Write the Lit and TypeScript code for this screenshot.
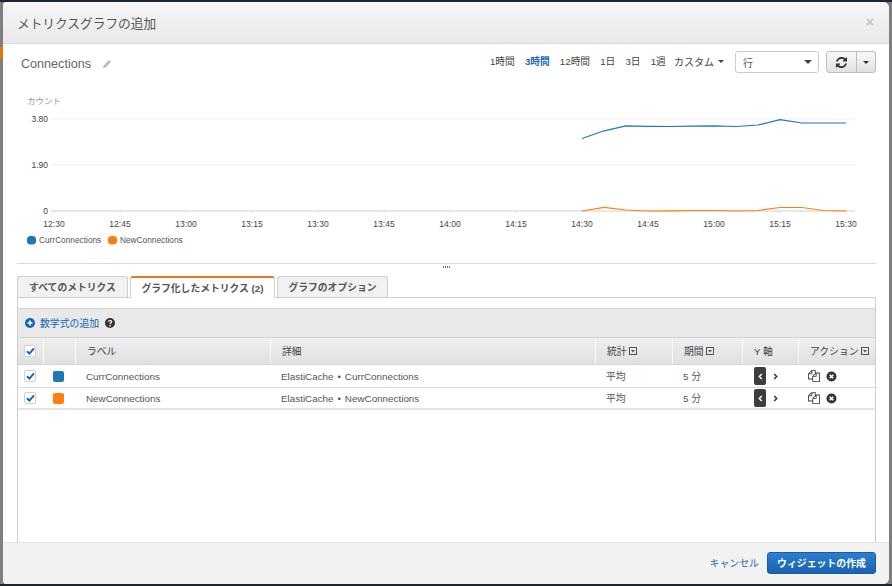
import { LitElement, html, css, svg } from "lit";
import { customElement } from "lit/decorators.js";

const FONT = css`"Liberation Sans", "Noto Sans CJK JP", Arial, sans-serif`;
const xs = [582, 604, 626, 648, 670, 692, 714, 736, 758, 780, 802, 824, 846];
const blue = [138.5, 130.8, 125.8, 126.3, 126.5, 126.2, 125.8, 126.5, 125, 119.6, 123, 123, 123];
const orange = [211, 207.4, 210, 211, 210.8, 210.5, 210.5, 211, 210.5, 207.5, 207.5, 210.5, 211];
const ticks = ["12:30", "12:45", "13:00", "13:15", "13:30", "13:45", "14:00", "14:15", "14:30", "14:45", "15:00", "15:15", "15:30"];
const pts = (ys: number[]) => ys.map((y, i) => `${xs[i]},${y - 88}`).join(" ");

const REFRESH = "M1639 1056q0 5-1 7-64 268-268 434.5t-478 166.5q-146 0-282.5-55t-243.5-157l-129 129q-19 19-45 19t-45-19-19-45v-448q0-26 19-45t45-19h448q26 0 45 19t19 45-19 45l-137 137q71 66 161 102t187 36q134 0 250-65t186-179q11-17 53-117 8-23 30-23h192q13 0 22.5 9.5t9.5 22.5zm25-800v448q0 26-19 45t-45 19h-448q-26 0-45-19t-19-45 19-45l138-138q-148-137-349-137-134 0-250 65t-186 179q-11 17-53 117-8 23-30 23h-199q-13 0-22.5-9.5t-9.5-22.5v-7q65-268 270-434.5t480-166.5q146 0 284 55.5t245 156.5l130-129q19-19 45-19t45 19 19 45z";
const FILES = "M1696 384q40 0 68 28t28 68v1216q0 40-28 68t-68 28h-960q-40 0-68-28t-28-68v-288h-544q-40 0-68-28t-28-68v-672q0-40 20-88t48-76l408-408q28-28 76-48t88-20h416q40 0 68 28t28 68v328q68-40 128-40h416zm-544 213l-299 299h299v-299zm-640-384l-299 299h299v-299zm196 647l316-316v-416h-384v416q0 40-28 68t-68 28h-416v640h512v-256q0-40 20-88t48-76zm956 804v-1152h-384v416q0 40-28 68t-68 28h-416v640h896z";

const check = html`<span class="cb"><svg width="9" height="8" viewBox="0 0 9 8"><path d="M1 4.2 3.4 6.6 8 1.4" fill="none" stroke="#1166bb" stroke-width="2"/></svg></span>`;
const sortIcon = html`<svg class="sort" width="8" height="8" viewBox="0 0 8 8"><rect x=".5" y=".5" width="7" height="7" fill="none" stroke="#555"/><path d="M2 3h4L4 5.5z" fill="#555"/></svg>`;
const copyIcon = html`<svg width="12" height="12" viewBox="0 0 1792 1792"><path d="${FILES}" fill="#3a3a3a"/></svg>`;
const delIcon = html`<svg width="11" height="11" viewBox="0 0 11 11"><circle cx="5.5" cy="5.5" r="5" fill="#333"/><path d="M3.7 3.7l3.6 3.6M7.3 3.7l-3.6 3.6" stroke="#fff" stroke-width="1.5"/></svg>`;

@customElement("app-root")
export class AppRoot extends LitElement {
  static styles = css`
    :host {
      display: block; width: 892px; height: 586px; box-sizing: border-box; padding: 2px 3px;
      font-family: ${FONT}; overflow: hidden;
      background:
        linear-gradient(#e07a10, #e07a10) 0 47px / 3px 12px no-repeat,
        linear-gradient(#1c2630, #1c2630) 0 0 / 100% 2px no-repeat,
        linear-gradient(#1c2630, #1c2630) 0 584px / 100% 2px no-repeat,
        #7f7f7f;
    }
    .modal { height: 582px; background: #fff; border-radius: 4px 6px 6px 4px; display: flex; flex-direction: column; overflow: hidden; }
    .head { height: 42px; flex: none; box-sizing: border-box; border-bottom: 1px solid #dcdcdc; background: linear-gradient(#f6f6f6, #e9e9e9); display: flex; align-items: center; justify-content: space-between; padding: 0 15px 1px 14px; }
    .title { font-size: 12.7px; color: #555; }
    .x { font-size: 14px; font-weight: bold; color: #c4c4c4; line-height: 1; }
    .main { flex: 1; padding: 0 13px 0 14px; display: flex; flex-direction: column; min-height: 0; }
    .toolbar { height: 44px; flex: none; display: flex; align-items: flex-start; padding: 7px 0 0 4px; box-sizing: border-box; }
    .name { font-size: 12.6px; color: #666; margin-top: 6px; display: flex; align-items: center; gap: 11px; }
    .times { margin-left: auto; display: flex; font-size: 9.7px; color: #444; gap: 10.2px; margin-top: 2px; height: 16px; align-items: center; }
    .times .on { color: #1166bb; font-weight: bold; }
    .custom { font-size: 10px; display: flex; align-items: center; gap: 4px; margin-left: -2px; }
    .caret { width: 0; height: 0; border: 3px solid transparent; border-top: 3px solid #444; border-bottom: 0; display: inline-block; }
    .select { width: 84px; height: 22px; box-sizing: border-box; border: 1px solid #ccc; border-radius: 3px; margin-left: 11px; display: flex; align-items: center; justify-content: space-between; padding: 0 6px 0 7px; font-size: 10px; color: #555; background: #fff; }
    .select .caret { border-width: 4px 4px 0; }
    .btns { display: flex; margin-left: 7px; height: 22px; box-sizing: border-box; border: 1px solid #bdbdbd; border-radius: 3px; background: linear-gradient(#f8f8f8, #e2e2e2); }
    .btns div { display: flex; align-items: center; justify-content: center; }
    .btns .a { width: 29px; border-right: 1px solid #bdbdbd; }
    .btns .b { width: 18px; }
    .btns .caret { border-width: 3px 3px 0; border-top-color: #333; }
    .chart { display: block; width: 859px; height: 175px; flex: none; overflow: visible; }
    .chart text { font-family: ${FONT}; }
    .divider { flex: none; height: 1px; background: #d8d8d8; position: relative; }
    .grip { position: absolute; left: 426px; top: 3px; width: 8px; height: 2px; background: repeating-linear-gradient(90deg, #777 0 1px, transparent 1px 2px); }
    .tabs { flex: none; display: flex; gap: 2px; margin-top: 12px; height: 22px; box-sizing: border-box; border-bottom: 1px solid #cfcfcf; }
    .tab { box-sizing: border-box; height: 21px; display: flex; align-items: center; justify-content: center; font-size: 9.8px; color: #555; font-weight: bold; background: #f1f1f1; border: 1px solid #cfcfcf; border-bottom: 0; border-radius: 3px 3px 0 0; }
    .tab.t1 { width: 111px; }
    .tab.t2 { width: 145px; }
    .tab.t3 { width: 111px; }
    .tab.active { height: 22px; background: #fff; border-top: 2px solid #e8791a; z-index: 1; }
    .panel { flex: 1; min-height: 0; border: solid #cfcfcf; border-width: 0 1px; display: flex; flex-direction: column; padding-top: 10px; }
    .math { flex: none; height: 30px; box-sizing: border-box; border-top: 1px solid #d4d4d4; border-bottom: 1px solid #d4d4d4; background: #e9e9e9; display: flex; align-items: center; gap: 5px; padding-left: 7px; font-size: 9.85px; color: #1166bb; }
    .math .help { margin-left: 1px; }
    .row { display: grid; grid-template-columns: 25px 32px 195px 325px 77px 70px 56px 78px; flex: none; box-sizing: border-box; }
    .thead { height: 27px; background: linear-gradient(#efefef, #e0e0e0); border-bottom: 1px solid #d4d4d4; font-size: 9.8px; color: #444; }
    .thead > div { display: flex; align-items: center; padding-left: 11px; gap: 2px; border-left: 1px solid #f7f7f7; box-sizing: border-box; }
    .thead > div:first-child { border-left: 0; }
    .tr { height: 23px; border-bottom: 1px solid #d9d9d9; font-size: 9.85px; color: #555; }
    .tr.last { height: 22px; border-bottom: 2px solid #e4e4e4; }
    .tr > div { display: flex; align-items: center; padding-left: 11px; box-sizing: border-box; }
    .row > .c0 { padding-left: 6px; }
    .row > .c1 { padding-left: 10px; }
    .detail { word-spacing: 1.2px; }
    .cb { width: 10px; height: 10px; border: 1px solid #d0d0d0; border-radius: 2px; background: #fff; display: inline-flex; align-items: center; justify-content: center; }
    .swatch { width: 11px; height: 11px; border-radius: 2px; }
    .tr > .yaxis { gap: 7px; padding-left: 12px; }
    .yl { width: 12px; height: 18px; background: #3d3d3d; border-radius: 2px; display: flex; align-items: center; justify-content: center; }
    .tr > .acts { gap: 6px; padding-left: 10px; }
    .foot { height: 42px; flex: none; box-sizing: border-box; background: #f2f2f2; border-top: 1px solid #e2e2e2; display: flex; align-items: center; justify-content: flex-end; gap: 8px; padding: 0 13px 2px 0; }
    .cancel { font-size: 9.9px; color: #1b66b3; }
    .primary { width: 109px; height: 22px; border-radius: 3px; background: linear-gradient(#2b7fd0, #1a62b0); color: #fff; font-size: 9.9px; font-weight: bold; display: flex; align-items: center; justify-content: center; border: 1px solid #1a5ca5; box-sizing: border-box; }
  `;

  row(name: string, color: string, last: boolean) {
    const chev = (d: string, c: string) => html`<svg width="5" height="7" viewBox="0 0 5 7"><path d="${d}" fill="none" stroke="${c}" stroke-width="1.5"/></svg>`;
    return html`<div class="row tr ${last ? "last" : ""}">
      <div class="c0">${check}</div>
      <div class="c1"><span class="swatch" style="background:${color}"></span></div>
      <div>${name}</div>
      <div class="detail">ElastiCache • ${name}</div>
      <div>平均</div>
      <div>5 分</div>
      <div class="yaxis"><span class="yl">${chev("M3.8 1 1.3 3.5l2.5 2.5", "#fff")}</span>${chev("M1.2 1l2.5 2.5-2.5 2.5", "#333")}</div>
      <div class="acts">${copyIcon}${delIcon}</div>
    </div>`;
  }

  render() {
    return html`<div class="modal">
      <div class="head"><div class="title">メトリクスグラフの追加</div><div class="x">×</div></div>
      <div class="main">
        <div class="toolbar">
          <div class="name">Connections
            <svg width="10" height="10" viewBox="0 0 10 10"><path d="M7 1l2 2-5.5 5.5L1 9l.5-2.5z" fill="#bdbdbd"/></svg>
          </div>
          <div class="times">
            <span>1時間</span><span class="on">3時間</span><span>12時間</span><span>1日</span><span>3日</span><span>1週</span>
            <span class="custom">カスタム <i class="caret"></i></span>
          </div>
          <div class="select">行 <i class="caret"></i></div>
          <div class="btns">
            <div class="a"><svg width="13" height="13" viewBox="0 0 1792 1792"><path d="${REFRESH}" fill="#333"/></svg></div>
            <div class="b"><i class="caret"></i></div>
          </div>
        </div>
        ${this.chart()}
        <div class="divider"><div class="grip"></div></div>
        <div class="tabs">
          <div class="tab t1">すべてのメトリクス</div>
          <div class="tab t2 active">グラフ化したメトリクス (2)</div>
          <div class="tab t3">グラフのオプション</div>
        </div>
        <div class="panel">
          <div class="math">
            <svg width="10" height="10" viewBox="0 0 10 10"><circle cx="5" cy="5" r="5" fill="#1166bb"/><path d="M2.5 5h5M5 2.5v5" stroke="#fff" stroke-width="1.6"/></svg>
            <span>数学式の追加</span>
            <svg class="help" width="10" height="10" viewBox="0 0 10 10"><circle cx="5" cy="5" r="5" fill="#333"/><path d="M3.4 3.9C3.5 2.1 6.7 2.1 6.7 3.8 6.7 5 5 4.9 5 6.2" fill="none" stroke="#fff" stroke-width="1.2"/><rect x="4.3" y="7" width="1.4" height="1.4" fill="#fff"/></svg>
          </div>
          <div class="row thead">
            <div class="c0">${check}</div><div></div><div>ラベル</div><div>詳細</div>
            <div>統計${sortIcon}</div><div>期間${sortIcon}</div><div>Y 軸</div><div>アクション${sortIcon}</div>
          </div>
          ${this.row("CurrConnections", "#1f77b4", false)}
          ${this.row("NewConnections", "#ff7f0e", true)}
        </div>
      </div>
      <div class="foot"><span class="cancel">キャンセル</span><div class="primary">ウィジェットの作成</div></div>
    </div>`;
  }

  chart() {
    return html`<svg class="chart" width="859" height="175" viewBox="17 0 859 175">
      ${svg`<text x="27" y="16" font-size="8.5" fill="#999">カウント</text>`}
      ${[[31, "3.80"], [77, "1.90"], [123, "0"]].map(([y, t]) => svg`
        <text x="48" y="${(y as number) + 3}" font-size="8.5" fill="#444" text-anchor="end">${t}</text>
        <line x1="51" x2="855" y1="${y}" y2="${y}" stroke="${t === "0" ? "#d0d0d0" : "#f0f0f0"}" stroke-width="1"/>`)}
      ${ticks.map((t, i) => svg`
        <line x1="${54 + i * 66}" x2="${54 + i * 66}" y1="123" y2="126" stroke="#e6e6e6"/>
        <text x="${54 + i * 66}" y="139" font-size="8.5" fill="#444" text-anchor="middle">${t}</text>`)}
      <polyline points="${pts(blue)}" fill="none" stroke="#1f77b4" stroke-width="1.2"/>
      <polyline points="${pts(orange)}" fill="none" stroke="#ff7f0e" stroke-width="1.2"/>
      <rect x="27" y="148" width="9" height="8.5" rx="3.5" fill="#1f77b4"/>
      <text x="39" y="155" font-size="8.3" fill="#555">CurrConnections</text>
      <rect x="108" y="148" width="9" height="8.5" rx="3.5" fill="#ff7f0e"/>
      <text x="120" y="155" font-size="8.3" fill="#555">NewConnections</text>
    </svg>`;
  }
}
